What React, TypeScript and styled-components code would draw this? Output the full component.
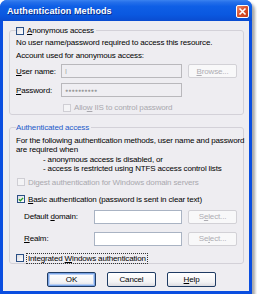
import styled, { createGlobalStyle } from "styled-components";

const GlobalStyle = createGlobalStyle`
  html, body {
    margin: 0;
    padding: 0;
    background: #ffffff;
  }
  body {
    font-family: "Liberation Sans", Arial, sans-serif;
    font-size: 8px;
    letter-spacing: -0.15px;
    color: #000;
  }
`;

export default function App() {
  return (
    <>
      <GlobalStyle />
      <Window>
        <TitleBar>
          <Title>Authentication Methods</Title>
          <CloseButton>
            <svg width="9" height="9" viewBox="0 0 9 9">
              <path d="M1.5 1.5 L7.5 7.5 M7.5 1.5 L1.5 7.5" stroke="#fff" strokeWidth="1.6" />
            </svg>
          </CloseButton>
        </TitleBar>
        <Client>
          <Group $top={5} $height={89}>
            <Legend>
              <CheckBox />
              <span>
                <u>A</u>nonymous access
              </span>
            </Legend>
            <Line $mt={3}>No user name/password required to access this resource.</Line>
            <Line $mt={4}>Account used for anonymous access:</Line>
            <FieldRow $mt={4}>
              <FieldLabel $w={45}>
                <u>U</u>ser name:
              </FieldLabel>
              <TextBox $w={121} $disabled>
                I
              </TextBox>
              <Button $disabled>
                <u>B</u>rowse...
              </Button>
            </FieldRow>
            <FieldRow $mt={5}>
              <FieldLabel $w={45}>
                <u>P</u>assword:
              </FieldLabel>
              <TextBox $w={121} $disabled>
                <Dots>●●●●●●●●●●</Dots>
              </TextBox>
            </FieldRow>
            <CheckRow $mt={6} $indent={47}>
              <CheckBox $disabled />
              <Grey>
                Allo<u>w</u> IIS to control password
              </Grey>
            </CheckRow>
          </Group>

          <Group $top={8} $height={141}>
            <Legend $blue>Authenticated access</Legend>
            <Para>
              For the following authentication methods, user name and password
              <br />
              are required when
              <Indent>- anonymous access is disabled, or</Indent>
              <Indent>- access is restricted using NTFS access control lists</Indent>
            </Para>
            <CheckRow $mt={4} $indent={1}>
              <CheckBox $disabled />
              <Grey>
                Digest authentication for Windows domain servers
              </Grey>
            </CheckRow>
            <CheckRow $mt={8} $indent={1}>
              <CheckBox $checked>
                <svg width="7" height="7" viewBox="0 0 7 7">
                  <path d="M1 3.2 L2.8 5 L6 1.6" stroke="#21A121" strokeWidth="1.5" fill="none" />
                </svg>
              </CheckBox>
              <span>
                <u>B</u>asic authentication (password is sent in clear text)
              </span>
            </CheckRow>
            <FieldRow $mt={6} $indent={8}>
              <FieldLabel $w={70}>
                Default <u>d</u>omain:
              </FieldLabel>
              <TextBox $w={88} />
              <Button $disabled>
                S<u>e</u>lect...
              </Button>
            </FieldRow>
            <FieldRow $mt={8} $indent={8}>
              <FieldLabel $w={70}>
                <u>R</u>ealm:
              </FieldLabel>
              <TextBox $w={88} />
              <Button $disabled>
                Se<u>l</u>ect...
              </Button>
            </FieldRow>
            <CheckRow $mt={8} $indent={0}>
              <CheckBox />
              <Focus>
                Integrated <u>W</u>indows authentication
              </Focus>
            </CheckRow>
          </Group>

          <ButtonBar>
            <DialogButton $default>OK</DialogButton>
            <DialogButton>Cancel</DialogButton>
            <DialogButton>
              <u>H</u>elp
            </DialogButton>
          </ButtonBar>
        </Client>
      </Window>
    </>
  );
}

const Window = styled.div`
  width: 252px;
  height: 294px;
  display: flex;
  flex-direction: column;
  background: #0a4ee0;
  border-radius: 7px 7px 0 0;
  box-shadow: 3px 3px 3px rgba(0, 0, 0, 0.35);
  overflow: hidden;
`;

const TitleBar = styled.div`
  height: 21px;
  flex: none;
  display: flex;
  align-items: center;
  justify-content: space-between;
  padding: 0 3px 0 7px;
  background: linear-gradient(
    to bottom,
    #3b83f0 0%,
    #2670ea 10%,
    #0f5fe6 30%,
    #0a58e0 70%,
    #0a4cd0 100%
  );
`;

const Title = styled.div`
  color: #fff;
  font-weight: bold;
  font-size: 9px;
  letter-spacing: 0.1px;
  text-shadow: 1px 1px 0 #0a2e8a;
  margin-top: 1px;
`;

const CloseButton = styled.div`
  width: 13px;
  height: 13px;
  box-sizing: border-box;
  border: 1px solid #fff;
  border-radius: 2px;
  background: linear-gradient(135deg, #ec8a6c 0%, #d9502b 50%, #c63d18 100%);
  display: flex;
  align-items: center;
  justify-content: center;
  margin-top: 1px;
`;

const Client = styled.div`
  flex: 1;
  margin: 0 3px 3px 3px;
  background: #eeedf1;
  display: flex;
  flex-direction: column;
`;

const Group = styled.fieldset<{ $top: number; $height: number }>`
  margin: ${(p) => p.$top}px 5px 0 6px;
  height: ${(p) => p.$height}px;
  box-sizing: border-box;
  border: 1px solid #d3d1d8;
  border-radius: 3px;
  padding: 0 6px 0 6px;
  min-width: 0;
`;

const Legend = styled.legend<{ $blue?: boolean }>`
  display: flex;
  align-items: center;
  gap: 3px;
  padding: 0 2px 0 0;
  margin-left: 0;
  height: 9px;
  line-height: 9px;
  color: ${(p) => (p.$blue ? "#1c5ac9" : "#000")};
`;

const Line = styled.div<{ $mt: number }>`
  margin-top: ${(p) => p.$mt}px;
  line-height: 9px;
  white-space: nowrap;
`;

const Para = styled.div`
  margin-top: 4px;
  line-height: 9.4px;
  white-space: nowrap;
`;

const Indent = styled.div`
  padding-left: 27px;
`;

const FieldRow = styled.div<{ $mt: number; $indent?: number }>`
  margin-top: ${(p) => p.$mt}px;
  padding-left: ${(p) => p.$indent ?? 0}px;
  display: flex;
  align-items: center;
  height: 14px;
`;

const FieldLabel = styled.div<{ $w: number }>`
  width: ${(p) => p.$w}px;
  flex: none;
`;

const TextBox = styled.div<{ $w: number; $disabled?: boolean }>`
  width: ${(p) => p.$w}px;
  height: 14px;
  box-sizing: border-box;
  flex: none;
  border: 1px solid ${(p) => (p.$disabled ? "#b9b8bc" : "#a9b3c3")};
  background: ${(p) => (p.$disabled ? "#efeef2" : "#ffffff")};
  color: #a6a6a6;
  padding-left: 3px;
  display: flex;
  align-items: center;
  font-size: 7px;
`;

const Dots = styled.span`
  font-size: 5px;
  letter-spacing: 0.2px;
  color: #9a9a9a;
`;

const Button = styled.div<{ $disabled?: boolean }>`
  width: 49px;
  height: 14px;
  box-sizing: border-box;
  flex: none;
  margin-left: auto;
  border: 1px solid ${(p) => (p.$disabled ? "#d2d1d6" : "#003c74")};
  border-radius: 2px;
  background: #f8f8f9;
  color: ${(p) => (p.$disabled ? "#aeadb3" : "#000")};
  display: flex;
  align-items: center;
  justify-content: center;
`;

const CheckRow = styled.div<{ $mt: number; $indent: number }>`
  margin-top: ${(p) => p.$mt}px;
  padding-left: ${(p) => p.$indent}px;
  display: flex;
  align-items: center;
  gap: 3px;
  height: 9px;
  white-space: nowrap;
`;

const CheckBox = styled.span<{ $disabled?: boolean; $checked?: boolean }>`
  width: 8px;
  height: 8px;
  box-sizing: border-box;
  flex: none;
  border: 1px solid ${(p) => (p.$disabled ? "#cfced4" : "#2a4f85")};
  background: ${(p) =>
    p.$disabled ? "#f4f4f6" : "linear-gradient(135deg, #dcdce2 0%, #ffffff 100%)"};
  display: flex;
  align-items: center;
  justify-content: center;
`;

const Grey = styled.span`
  color: #a9a8ae;
`;

const Focus = styled.span`
  outline: 1px dotted #333;
  outline-offset: 0;
  padding: 0 1px;
`;

const ButtonBar = styled.div`
  display: flex;
  gap: 11px;
  padding-left: 44px;
  margin-top: 8px;
`;

const DialogButton = styled.div<{ $default?: boolean }>`
  width: 49px;
  height: 15px;
  box-sizing: border-box;
  border: 1px solid #1f3b63;
  border-radius: 2px;
  background: linear-gradient(to bottom, #ffffff 0%, #f2f2f4 70%, #dcdce2 100%);
  box-shadow: ${(p) =>
    p.$default ? "inset 0 0 0 1px #7aa4e6, inset 0 0 0 2px #b9d0f5" : "none"};
  display: flex;
  align-items: center;
  justify-content: center;
`;
